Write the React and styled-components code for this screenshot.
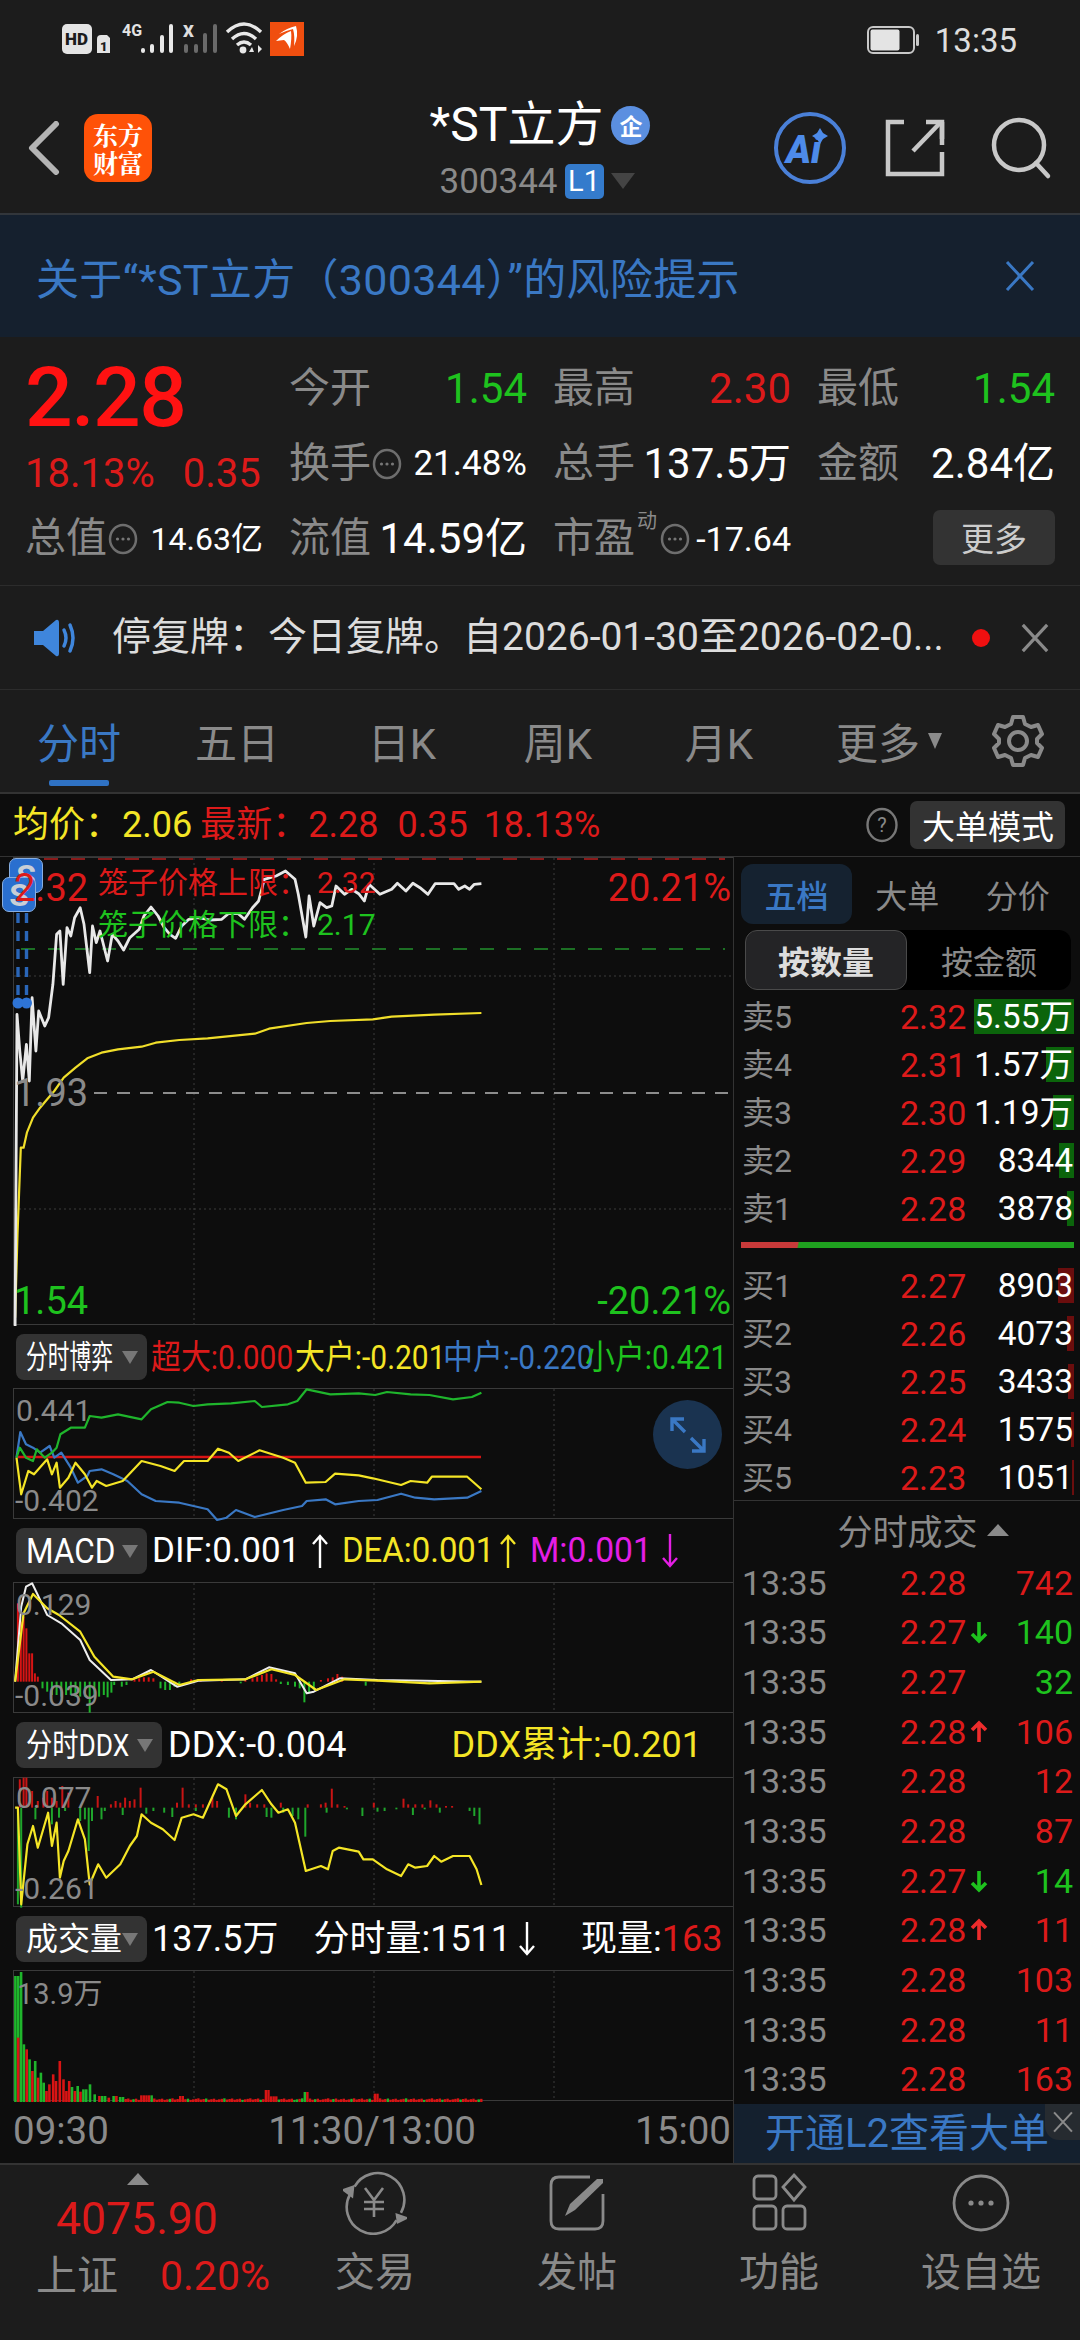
import React from 'react';
import styled, { createGlobalStyle } from 'styled-components';

const RED = '#dc1a1a';
const GREEN = '#1ec21e';
const GREY = '#8a8a8a';
const YELLOW = '#f4e526';
const BLUE = '#3a78c4';
const MAG = '#e41ee4';
const FONT = 'Roboto, "Noto Sans CJK SC", sans-serif';

const Global = createGlobalStyle`
  html, body { margin: 0; padding: 0; background: #1c1c1c; }
  * { box-sizing: border-box; }
  body { font-family: ${FONT}; }
`;

const Page = styled.div`
  width: 1080px; height: 2340px; overflow: hidden; background: #1c1c1c; color: #fff;
  display: flex; flex-direction: column;
`;

/* status bar */
const StatusBar = styled.div`
  height: 68px; flex: none; display: flex; align-items: center; justify-content: space-between;
  padding: 12px 63px 0 62px;
`;
const StatusRight = styled.div`display: flex; align-items: center; gap: 16px;`;
const Clock = styled.span`font-size: 33px; color: #ddd; line-height: 1;`;

/* header */
const Header = styled.div`
  height: 147px; flex: none; border-bottom: 2px solid #32363b; position: relative;
  display: grid; grid-template-columns: 330px 1fr 330px; align-items: start;
`;
const HeaderLeft = styled.div`display: flex; align-items: center; gap: 24px; padding: 46px 0 0 28px;`;
const LogoTile = styled.div`
  width: 68px; height: 68px; border-radius: 14px; background: #ff5208; display: flex; flex-direction: column;
  align-items: center; justify-content: center; font-family: "Noto Serif CJK SC", "Noto Sans CJK SC", serif;
  font-weight: 700; font-size: 25px; line-height: 28px; color: #fff;
`;
const HeaderCenter = styled.div`display: flex; flex-direction: column; align-items: center; padding-top: 28px;`;
const TitleRow = styled.div`display: flex; align-items: center; gap: 8px; height: 58px;`;
const Title = styled.span`font-size: 48px; line-height: 1; color: #fff;`;
const Verified = styled.span`
  width: 39px; height: 39px; border-radius: 50%; background: #5b8fe0; color: #fff; font-size: 23px; font-weight: 700;
  display: flex; align-items: center; justify-content: center;
`;
const CodeRow = styled.div`display: flex; align-items: center; gap: 7px; height: 42px; margin-top: 6px; margin-left: -6px;`;
const Code = styled.span`font-size: 35px; color: ${GREY}; line-height: 1;`;
const LevelBadge = styled.span`
  width: 39px; height: 35px; border-radius: 5px; background: #347bcc; color: #fff; font-size: 29px;
  display: flex; align-items: center; justify-content: center;
`;
const HeaderRight = styled.div`display: flex; align-items: center; justify-content: flex-end; gap: 0; padding: 42px 28px 0 0;`;

/* warning banner */
const Banner = styled.div`
  height: 122px; flex: none; background: #15202e; display: flex; align-items: center; justify-content: space-between;
  padding: 0 44px 0 36px; color: ${BLUE}; font-size: 43px; letter-spacing: .32px;
`;

/* quote */
const Quote = styled.div`
  height: 248px; flex: none; padding: 14px 0 0 25px; display: grid;
  grid-template-columns: 238px 238px 238px 238px; column-gap: 26px; grid-template-rows: 75px 75px 75px;
`;
const PriceBlock = styled.div`grid-row: 1 / 3; display: flex; flex-direction: column;`;
const BigPrice = styled.div`font-size: 84px; font-weight: 500; color: #ff1212; line-height: 88px; margin-top: 3px; letter-spacing: -1.5px;`;
const Delta = styled.div`display: flex; gap: 28px; font-size: 40px; color: ${RED}; line-height: 44px; margin-top: 10px; white-space: nowrap;`;
const Stat = styled.div`display: flex; align-items: center; justify-content: space-between; white-space: nowrap; position: relative;`;
const StatLabel = styled.span`font-size: 41px; color: ${GREY}; line-height: 1;`;
const StatValue = styled.span`font-size: ${p => p.$s || 42}px; color: ${p => p.$c || '#fff'}; line-height: 1; margin-left: auto;`;
const Sup = styled.span`position: absolute; left: 84px; top: 4px; font-size: 20px; color: ${GREY};`;
const MoreBtn = styled.div`
  width: 123px; height: 55px; border-radius: 7px; background: #333; color: #ccc; font-size: 33px; margin: -3px 0 0 116px;
  display: flex; align-items: center; justify-content: center;
`;

/* notice */
const Notice = styled.div`
  height: 105px; flex: none; border-top: 1px solid #2c2c2c; border-bottom: 1px solid #2c2c2c; display: flex; align-items: center;
  padding: 0 30px 0 34px;
`;
const NoticeText = styled.span`font-size: 39px; color: #ddd; margin-left: 34px; white-space: nowrap; width: 835px; overflow: hidden; line-height: 1.3;`;
const RedDot = styled.span`width: 18px; height: 18px; border-radius: 50%; background: #f01010; margin: 0 30px 0 26px; flex: none;`;

/* tabs */
const Tabs = styled.div`
  height: 104px; flex: none; display: grid; grid-template-columns: 158px 158px 172px 140px 182px 158px 100px;
  align-items: center; position: relative; border-bottom: 2px solid #333;
`;
const Tab = styled.div`
  font-size: 42px; color: ${p => (p.$on ? BLUE : GREY)}; display: flex; align-items: center; justify-content: center; height: 100%;
  position: relative; gap: 8px; padding-bottom: 1px;
  ${p => p.$on && `&::after { content: ''; position: absolute; left: 49px; width: 60px; height: 6px; bottom: 6px; border-radius: 2px; background: #2f72c4; }`}
`;

/* body */
const Body = styled.div`display: flex; background: #0d0d0d; height: 1369px; flex: none;`;
const LeftCol = styled.div`width: 734px; flex: none; border-right: 1px solid #333; display: flex; flex-direction: column;`;
const RightCol = styled.div`flex: 1; display: flex; flex-direction: column; padding-top: 0;`;

const SummaryRow = styled.div`
  height: 63px; flex: none; width: 1080px; display: flex; align-items: center; padding: 0 10px 0 13px; font-size: 36px; white-space: nowrap;
  background: #0d0d0d; position: relative; z-index: 1; border-bottom: 1px solid #333; margin-right: -346px;
`;
const Sum = styled.span`color: ${p => p.$c}; margin-left: ${p => p.$ml || 0}px; line-height: 1;`;
const ModeBtn = styled.div`
  height: 48px; width: 155px; border-radius: 7px; background: #333; color: #fff; font-size: 33px; margin-left: 12px; margin-top: -1px;
  display: flex; align-items: center; justify-content: center;
`;

const Pane = styled.div`
  margin-left: 13px; width: 720px; height: ${p => p.$h}px; flex: none; position: relative;
  border-top: 1px solid #3a3a3a; border-bottom: 1px solid #3a3a3a; border-left: 1px solid #3a3a3a;
  svg.draw { position: absolute; left: 0; top: 0; overflow: visible; }
`;
const ChartLabel = styled.span`
  position: absolute; top: ${p => p.$y}px; ${p => (p.$r ? `right: 2px;` : `left: ${p.$x ?? 2}px;`)}
  transform: translateY(-50%); font-size: ${p => p.$s || 30}px; color: ${p => p.$c || GREY}; line-height: 1; white-space: nowrap;
`;
const LimitValue = styled.span`margin-left: 9px;`;
const SBadge = styled.span`
  position: absolute; left: ${p => p.$x}px; top: ${p => p.$y}px; width: 34px; height: 35px; border-radius: 7px;
  background: #2a6fcf; border: 1px solid #88aee0; color: #c9ced6; font-size: 32px; font-weight: 700; display: flex; align-items: center; justify-content: center; line-height: 1;
`;
const ExpandBtn = styled.div`
  position: absolute; left: 639px; top: 11px; width: 69px; height: 69px; border-radius: 50%; background: #1a3350;
  display: flex; align-items: center; justify-content: center;
`;

const IndRow = styled.div`height: ${p => p.$h || 63}px; flex: none; display: flex; align-items: center; padding-left: 16px; font-size: ${p => p.$s || 35}px; white-space: nowrap;`;
const Pill = styled.div`
  width: ${p => p.$w || 131}px; height: 46px; flex: none; border-radius: 8px; background: #333; position: relative; overflow: hidden;
  &::after { content: ''; position: absolute; right: 9px; top: 17px; border: 8px solid transparent; border-top: 13px solid #777; border-bottom: 0; }
`;
const PillText = styled.span`
  position: absolute; left: 10px; top: 50%; font-size: ${p => p.$s || 32}px; color: #fff; line-height: 1; white-space: nowrap;
  transform: translateY(-50%) scaleX(${p => p.$sx || 1}); transform-origin: left center;
`;
const Read = styled.span`
  color: ${p => p.$c || '#fff'}; margin-left: ${p => p.$ml || 0}px; line-height: 1; display: inline-flex; align-items: center;
  ${p => p.$sx && `transform: scaleX(${p.$sx}); transform-origin: left center; width: ${p.$w}px;`}
`;

const Axis = styled.div`
  height: 61px; flex: none; padding: 0 2px 0 13px; display: flex; justify-content: space-between; align-items: center;
  font-size: 38.5px; color: ${GREY}; line-height: 1;
`;

/* right column */
const PanelTabs = styled.div`height: 60px; margin: 70px 7px 0 7px; flex: none; display: grid; grid-template-columns: 111px 1fr 1fr; align-items: center;`;
const PanelTab = styled.div`
  height: 60px; border-radius: 12px; background: ${p => (p.$on ? '#152230' : 'transparent')}; color: ${p => (p.$on ? BLUE : GREY)};
  font-size: 32px; font-weight: ${p => (p.$on ? 500 : 400)}; display: flex; align-items: center; justify-content: center;
`;
const Toggle = styled.div`height: 60px; margin: 6px 9px 0 11px; flex: none; border-radius: 12px; background: #000; display: grid; grid-template-columns: 162px 1fr;`;
const ToggleItem = styled.div`
  border-radius: 12px; font-size: 32px; display: flex; align-items: center; justify-content: center;
  ${p => (p.$on ? 'background:#242426; border:1px solid #4a4a4a; color:#ddd; font-weight:700;' : `color:${GREY};`)}
`;
const Book = styled.div`flex: none; margin-top: ${p => p.$mt}px;`;
const BookRow = styled.div`
  height: 48px; display: grid; grid-template-columns: 158px 1fr; padding: 0 7px 0 8px; align-items: center; position: relative; font-size: 34px; line-height: 1;
`;
const BookLabel = styled.span`color: ${GREY}; font-size: 32px;`;
const BookPrice = styled.span`color: ${RED}; z-index: 1;`;
const BookVol = styled.span`
  position: absolute; right: 7px; top: 50%; transform: translateY(-50%); z-index: 1; color: #fff; white-space: nowrap; font-size: 33.5px;
`;
const DepthBar = styled.span`
  position: absolute; right: 6px; top: 6px; height: 35px; background: ${p => (p.$sell ? '#0b640b' : '#6a0d0d')};
`;
const Ratio = styled.div`
  height: 6px; margin: 9px 6px 0 7px; flex: none; background: linear-gradient(100deg, #c83a3a 0 17%, #1fa01f 17.5% 100%);
`;
const TradeHead = styled.div`
  height: 58px; flex: none; border-top: 1px solid #333; margin-top: -2px; color: ${GREY}; font-size: 35px; display: flex; align-items: center; justify-content: center; gap: 9px; padding-left: 32px;
`;
const Tri = styled.span`width: 0; height: 0; border-left: 11px solid transparent; border-right: 11px solid transparent; border-bottom: 12px solid ${GREY};`;
const Trades = styled.div`flex: none; height: 546px; display: flex; flex-direction: column;`;
const TradeRow = styled.div`
  flex: 1; display: grid; grid-template-columns: 158px 70px 18px 1fr; align-items: center; padding: 0 7px 0 8px; font-size: 34px; line-height: 1;
`;
const TradeTime = styled.span`color: ${GREY};`;
const TradeVol = styled.span`color: ${p => p.$c}; text-align: right;`;
const L2 = styled.div`
  height: 59px; flex: none; background: #14202e; color: ${BLUE}; font-size: 40px; padding-left: 31px; display: flex; align-items: center; position: relative; line-height: 1;
`;
const L2Close = styled.div`
  position: absolute; right: 0; top: 0; width: 35px; height: 36px; background: #262b30; border-bottom-left-radius: 14px;
  display: flex; align-items: center; justify-content: center;
`;

/* bottom nav */
const Nav = styled.div`
  flex: 1; border-top: 2px solid #333; background: #1c1c1c; display: grid; grid-template-columns: 274px repeat(4, 202px); margin-top: 0;
`;
const IndexBlock = styled.div`display: flex; flex-direction: column; align-items: center; padding-top: 8px;`;
const NavTri = styled.span`width: 0; height: 0; border-left: 11px solid transparent; border-right: 11px solid transparent; border-bottom: 12px solid #8a8a8a; margin-left: 2px;`;
const IndexValue = styled.div`font-size: 44.5px; color: ${RED}; line-height: 48px; margin-top: 10px;`;
const IndexRow = styled.div`display: flex; align-items: center; gap: 42px; margin: 8px 0 0 36px; align-self: flex-start; line-height: 50px; font-size: 41px;`;
const IndexName = styled.span`color: ${GREY};`;
const IndexChange = styled.span`color: ${RED};`;
const NavItem = styled.div`display: flex; flex-direction: column; align-items: center; padding-top: 6px;`;
const NavLabel = styled.span`font-size: 40px; color: ${GREY}; line-height: 50px; margin-top: 13px;`;
const IconGap = styled.span`width: ${p => p.$w}px; flex: none;`;

/* chart geometry: reference-space points to pane-local pixels */
const SX = 2.119;
const lx = x => +(x / SX - 14).toFixed(1);
const trace = (pts, y0) => pts.map(([x, y]) => `${lx(x)},${+(y / 3 + y0).toFixed(1)}`).join(' ');

const MAIN_WHITE = [[32,1425],[36,490],[42,600],[48,690],[56,580],[62,690],[68,440],[76,600],[82,480],[95,525],[103,500],[112,400],[120,250],[127,240],[134,400],[142,230],[150,255],[158,200],[170,170],[178,220],[190,365],[196,225],[204,275],[212,240],[228,330],[238,250],[250,270],[262,297],[275,260],[295,235],[305,195],[320,168],[335,195],[348,230],[360,250],[372,262],[385,225],[400,205],[420,200],[445,207],[470,205],[485,187],[505,188],[518,205],[535,170],[548,150],[560,85],[585,75],[605,60],[625,85],[632,130],[648,258],[655,135],[665,225],[678,155],[692,170],[703,165],[712,105],[730,130],[745,115],[760,128],[772,150],[782,100],[805,130],[830,115],[842,97],[860,120],[875,97],[890,110],[907,130],[922,98],[962,98],[972,115],[985,105],[995,115],[1005,100],[1020,98]];
const MAIN_YELLOW = [[32,1400],[37,1150],[44,890],[50,890],[57,845],[70,800],[85,770],[100,745],[115,720],[135,680],[160,650],[185,622],[215,605],[250,595],[300,587],[330,575],[380,567],[440,562],[540,548],[570,533],[650,516],[700,510],[790,505],[830,497],[920,491],[1020,486]];
const G_GREEN = [[35,410],[42,380],[55,410],[70,420],[78,385],[95,410],[110,395],[120,380],[128,340],[150,320],[180,320],[190,285],[215,290],[250,280],[300,295],[320,265],[355,243],[380,245],[410,255],[440,250],[490,247],[540,240],[555,258],[610,250],[630,240],[650,205],[700,220],[760,217],[795,222],[820,213],[870,220],[910,222],[960,235],[1000,228],[1020,215]];
const G_BLUE = [[35,410],[43,333],[55,370],[70,380],[85,395],[105,375],[115,410],[130,395],[150,440],[165,485],[185,465],[190,450],[215,445],[240,460],[270,480],[300,520],[330,540],[380,545],[410,555],[440,565],[460,597],[480,590],[500,567],[540,588],[600,567],[640,555],[650,540],[690,535],[710,550],[760,540],[800,537],[850,518],[880,530],[920,535],[990,530],[1020,510]];
const G_YELLOW = [[35,410],[45,520],[60,450],[72,460],[100,415],[110,460],[120,425],[127,500],[145,470],[160,425],[180,460],[195,500],[205,480],[225,495],[260,480],[300,420],[340,435],[370,450],[390,420],[440,420],[462,383],[485,395],[505,420],[550,388],[600,410],[625,425],[648,485],[690,483],[710,458],[760,463],[790,472],[850,492],[870,480],[905,485],[915,467],[990,467],[1020,505]];
const M_WHITE = [[32,1085],[45,860],[55,800],[68,790],[80,825],[100,885],[130,910],[170,960],[190,1020],[235,1080],[280,1078],[320,1050],[375,1100],[420,1082],[520,1078],[570,1042],[625,1060],[650,1120],[665,1115],[720,1075],[800,1080],[900,1082],[1020,1085]];
const M_YELLOW = [[32,1085],[50,880],[70,822],[100,865],[125,885],[170,935],[200,1010],[240,1070],[280,1078],[325,1055],[380,1095],[420,1080],[520,1078],[575,1048],[625,1065],[670,1110],[730,1078],[800,1082],[910,1090],[1020,1085]];
const M_RED = [[38,850],[44,905],[50,890],[56,925],[62,1000],[68,1000],[74,1060],[80,1070],[285,1078],[295,1075],[305,1072],[315,1072],[325,1075],[405,1078],[425,1079],[470,1080],[520,1079],[535,1075],[545,1070],[555,1065],[565,1060],[575,1062],[585,1078],[680,1080],[695,1075],[705,1072],[715,1062],[725,1070],[800,1080],[850,1081]];
const M_GREEN = [[90,1105],[100,1115],[110,1125],[120,1125],[130,1130],[140,1125],[150,1125],[160,1130],[170,1130],[180,1130],[190,1178],[200,1130],[210,1130],[220,1125],[228,1132],[236,1118],[242,1095],[258,1100],[268,1095],[340,1105],[350,1110],[360,1110],[370,1100],[380,1095],[510,1090],[595,1092],[610,1095],[625,1100],[635,1105],[645,1147],[655,1120],[665,1110],[775,1097],[910,1092]];
const D_LINE = [[32,200],[38,200],[45,490],[58,310],[70,255],[80,320],[102,215],[110,315],[120,245],[127,410],[135,360],[145,330],[165,235],[180,295],[190,430],[208,370],[225,410],[255,370],[275,315],[290,285],[300,220],[320,245],[345,265],[370,297],[385,230],[410,220],[430,230],[462,130],[480,145],[500,225],[520,190],[555,147],[575,190],[590,215],[610,205],[625,245],[648,390],[680,375],[695,385],[705,330],[718,320],[760,332],[770,355],[790,355],[820,385],[850,405],[865,370],[880,380],[905,375],[920,345],[935,362],[960,345],[995,345],[1010,385],[1020,432]];
const D_RED = [[42,115],[50,110],[56,110],[68,150],[80,180],[92,170],[100,150],[110,170],[120,180],[132,135],[145,155],[207,165],[235,190],[245,180],[255,185],[265,170],[275,180],[285,175],[298,140],[375,185],[387,140],[400,190],[415,190],[430,190],[450,170],[460,180],[520,160],[530,185],[545,190],[560,190],[595,185],[652,190],[680,190],[690,185],[703,143],[715,190],[730,195],[792,185],[855,173],[865,190],[880,190],[895,190],[912,178],[925,190],[945,195],[958,195]];
const D_GREEN = [[38,490],[45,500],[75,235],[110,250],[125,230],[138,210],[170,240],[180,235],[188,330],[195,240],[215,235],[222,210],[260,222],[310,218],[325,210],[348,215],[365,228],[415,210],[485,230],[500,235],[565,228],[575,230],[600,215],[620,225],[632,235],[647,287],[692,215],[735,205],[768,225],[800,212],[815,210],[840,205],[875,222],[900,205],[932,215],[995,210],[1005,225],[1016,250]];
const V_HEAD = [[32,705,'g'],[38,705,'g'],[44,693,'g'],[38,890,'r'],[50,910,'g'],[56,925,'r'],[62,955,'g'],[68,990,'r'],[74,960,'g'],[80,1010,'r'],[86,995,'g'],[92,1025,'g'],[98,1050,'r'],[104,1030,'r'],[112,1000,'r'],[118,1020,'r'],[126,960,'r'],[134,1015,'r'],[140,1050,'r'],[146,1020,'r'],[152,1038,'g'],[158,1050,'r'],[164,1035,'g'],[170,1052,'r'],[176,1045,'g'],[182,1045,'g'],[190,1030,'g'],[200,1060,'g'],[210,1065,'r'],[216,1065,'g'],[222,1065,'g'],[230,1070,'r'],[240,1065,'g'],[246,1065,'r'],[254,1068,'g'],[260,1068,'g']];
const bump = x => (x > 295 && x < 325 ? 1063 : x > 558 && x < 570 ? 1047 : x > 640 && x < 652 ? 1053 : x > 792 && x < 802 ? 1058 : x > 570 && x < 590 ? 1066 : x > 380 && x < 392 ? 1065 : 1072 + ((x * 7) % 5));
const V_TAIL = [];
for (let x = 266; x <= 1022; x += 5.5) {
  V_TAIL.push([x, bump(x), Math.round(x / 5.5) % 7 === 2 || (x > 620 && x < 652 && Math.round(x) % 2 === 0) ? 'g' : 'r']);
}

const barX = x => lx(x) - 1;
const Bars = ({ data, base, y0, color, w = 2 }) => data.map(([x, y], i) => {
  const a = y / 3 + y0;
  const b = base / 3 + y0;
  return <rect key={i} x={barX(x)} y={Math.min(a, b)} width={w} height={Math.abs(a - b)} fill={color} />;
});

const GridX = ({ h }) => [180, 360, 540].map(x => (
  <line key={x} x1={x} x2={x} y1={0} y2={h} stroke="#3c3c3c" strokeWidth="1" strokeDasharray="2 3" />
));

const Draw = ({ h, children }) => (
  <svg className="draw" width="719" height={h} viewBox={`0 0 719 ${h}`}>{children}</svg>
);

const line = { fill: 'none', strokeLinejoin: 'round' };

const Chevron = () => (
  <svg width="32" height="54" viewBox="0 0 32 54"><path d="M28 3 L4 27 L28 51" fill="none" stroke="#b4b4b4" strokeWidth="6" strokeLinecap="round" strokeLinejoin="round" /></svg>
);
const AiIcon = () => (
  <svg width="76" height="76" viewBox="0 0 76 76">
    <circle cx="38" cy="38" r="34" fill="none" stroke="#4a80d8" strokeWidth="4" />
    <text x="14" y="53" fontFamily="Roboto" fontWeight="900" fontStyle="italic" fontSize="38" fill="#4d8bea">Ai</text>
    <path d="M48 18 l3 5 5 3 -5 3 -3 5 -3 -5 -5 -3 5 -3z" fill="#4d8bea" />
  </svg>
);
const ShareIcon = () => (
  <svg width="62" height="62" viewBox="0 0 62 62" fill="none" stroke="#c8c8c8" strokeWidth="4.5">
    <path d="M20 5 H4 V57 H58 V35 " /><path d="M58 5 V28" />
    <path d="M29 34 L56 6" /><path d="M42 5 H58 V22" />
  </svg>
);
const SearchIcon = () => (
  <svg width="62" height="64" viewBox="0 0 62 64" fill="none" stroke="#c8c8c8" strokeWidth="4.5" strokeLinecap="round">
    <circle cx="29" cy="29" r="25" /><path d="M46 47 L58 60" />
  </svg>
);
const CloseX = ({ c = BLUE, s = 32, w = 3 }) => (
  <svg width={s} height={s} viewBox="0 0 32 32"><path d="M3 2 L29 30 M29 2 L3 30" stroke={c} strokeWidth={w} fill="none" /></svg>
);
const Dots = ({ mx = 3 }) => (
  <svg width="30" height="32" viewBox="0 0 30 32" style={{ flex: 'none', margin: `0 ${mx}px` }}>
    <ellipse cx="15" cy="16" rx="13" ry="14" fill="none" stroke="#6e6e6e" strokeWidth="2.5" />
    <circle cx="9.5" cy="16" r="1.6" fill="#777" /><circle cx="15" cy="16" r="1.6" fill="#777" /><circle cx="20.5" cy="16" r="1.6" fill="#777" />
  </svg>
);
const Speaker = () => (
  <svg width="44" height="38" viewBox="0 0 44 38" style={{ flex: 'none' }}>
    <path d="M0 12 H9 L22 1 Q25 0 25 4 V34 Q25 38 22 37 L9 26 H0 Z" fill="#3f86dc" />
    <path d="M30 11 Q34 19 30 27 M36 6 Q42 19 36 32" stroke="#3f86dc" strokeWidth="3.5" fill="none" strokeLinecap="round" />
  </svg>
);
const Gear = () => (
  <svg width="52" height="54" viewBox="0 0 52 54" fill="none" stroke={GREY} strokeWidth="4" strokeLinejoin="round">
    <path d="M21 3 H31 L33 10 L39 13 L46 11 L50 20 L45 25 V29 L50 34 L46 43 L39 41 L33 44 L31 51 H21 L19 44 L13 41 L6 43 L2 34 L7 29 V25 L2 20 L6 11 L13 13 L19 10 Z" />
    <circle cx="26" cy="27" r="9" />
  </svg>
);
const ArrowGlyph = ({ dir, c, h = 34 }) => (
  <svg width="20" height={h} viewBox={`0 0 20 ${h}`} style={{ flex: 'none' }}>
    {dir === 'up'
      ? <path d={`M10 2 V${h} M3 10 L10 2 L17 10`} stroke={c} strokeWidth="2.4" fill="none" />
      : <path d={`M10 0 V${h - 2} M3 ${h - 10} L10 ${h - 2} L17 ${h - 10}`} stroke={c} strokeWidth="2.4" fill="none" />}
  </svg>
);
const TickArrow = ({ dir }) => (
  <svg width="18" height="24" viewBox="0 0 18 24">
    {dir === 'up'
      ? <path d="M9 22 V3 M2 10 L9 3 L16 10" stroke="#ee2c2c" strokeWidth="3.6" fill="none" />
      : <path d="M9 2 V21 M2 14 L9 21 L16 14" stroke={GREEN} strokeWidth="3.6" fill="none" />}
  </svg>
);
const YenIcon = () => (
  <svg width="64" height="64" viewBox="0 0 64 64" fill="none" stroke={GREY} strokeWidth="2.6">
    <path d="M13 14 A26 26 0 0 1 57 44" transform="rotate(-5 32 32)" /><path d="M52 51 A26 26 0 0 1 8 21" transform="rotate(-5 32 32)" />
    <path d="M2 21 L11 18 L10 27Z" fill={GREY} transform="translate(-1 -2)" /><path d="M60 44 L52 48 L51 41Z" fill={GREY} transform="translate(3 3)" />
    <path d="M22 17 L31 29 L40 17 M31 29 V46 M21 31 H41 M21 38 H41" />
  </svg>
);
const PostIcon = () => (
  <svg width="64" height="64" viewBox="0 0 64 64" fill="none" stroke={GREY} strokeWidth="2.8">
    <path d="M45 6 H14 Q6 6 6 14 V50 Q6 58 14 58 H50 Q58 58 58 50 V23" />
    <path d="M20 45 L25 33 L52 8 L58 8 L58 12 L30 39 Z" fill={GREY} stroke="none" />
  </svg>
);
const FuncIcon = () => (
  <svg width="64" height="64" viewBox="0 0 64 64" fill="none" stroke={GREY} strokeWidth="2.8">
    <rect x="7" y="5" width="22" height="23" rx="4" /><rect x="7" y="35" width="22" height="23" rx="4" /><rect x="36" y="35" width="22" height="23" rx="4" />
    <path d="M47 4 L58 16 L47 29 L36 16 Z" />
  </svg>
);
const MoreIcon = () => (
  <svg width="64" height="64" viewBox="0 0 64 64" fill="none" stroke={GREY} strokeWidth="2.8">
    <circle cx="32" cy="32" r="27" /><circle cx="22" cy="32" r="2.6" fill={GREY} stroke="none" /><circle cx="32" cy="32" r="2.6" fill={GREY} stroke="none" /><circle cx="42" cy="32" r="2.6" fill={GREY} stroke="none" />
  </svg>
);
const StatusIcons = () => (
  <svg width="244" height="36" viewBox="62 24 244 36">
    <rect x="62" y="26" width="30" height="30" rx="5" fill="#e4e4e4" />
    <text x="65" y="47" fontFamily="Roboto" fontWeight="900" fontSize="17" fill="#1c1c1c">HD</text>
    <path d="M97 41 Q97 37 101 37 H107 L110 40 V55 H97Z" fill="#e4e4e4" />
    <text x="100" y="53" fontFamily="Roboto" fontWeight="900" fontSize="13" fill="#1c1c1c">1</text>
    <text x="122" y="38" fontFamily="Roboto" fontWeight="700" fontSize="16" fill="#e4e4e4">4G</text>
    {[[141, 50], [150, 46], [160, 37], [169, 26]].map(([x, y]) => <rect key={x} x={x} y={y} width="4" height={55 - y} rx="2" fill="#e8e8e8" />)}
    <text x="183" y="39" fontFamily="Roboto" fontWeight="900" fontSize="17" fill="#ddd">X</text>
    {[[184, 46], [194, 46], [203, 35], [213, 26]].map(([x, y]) => <rect key={x} x={x} y={y} width="4" height={55 - y} rx="2" fill="#6a6a6a" />)}
    <path d="M227 34 Q244 18 261 34 M232 41 Q244 30 256 41 M237 47 Q244 41 251 47" stroke="#e8e8e8" strokeWidth="3.4" fill="none" />
    <circle cx="243" cy="52" r="3.4" fill="#e8e8e8" />
    <path d="M252 49 L249 54 H254Z M258 47 V55 L262 51Z" fill="#e8e8e8" />
    <rect x="270" y="24" width="34" height="34" fill="#f04e0f" />
    <path d="M276 43 Q283 36 291 33 Q292 40 290 51 Q287 44 284 42 Z" fill="#fff" />
    <path d="M279 36 Q287 30 296 28 Q299 38 294 48 Q295 38 293 31 Q285 33 279 36Z" fill="#fff" />
  </svg>
);
const Battery = () => (
  <svg width="52" height="28" viewBox="0 0 52 28">
    <rect x="1" y="1" width="46" height="26" rx="5" fill="none" stroke="#c8c8c8" strokeWidth="2" />
    <rect x="3.5" y="3.5" width="29" height="21" rx="2" fill="#e4e4e4" />
    <rect x="49" y="8" width="3" height="12" rx="1.5" fill="#c8c8c8" />
  </svg>
);

const ASKS = [['卖5', '2.32', '5.55万', 55500], ['卖4', '2.31', '1.57万', 15700], ['卖3', '2.30', '1.19万', 11900], ['卖2', '2.29', '8344', 8344], ['卖1', '2.28', '3878', 3878]];
const BIDS = [['买1', '2.27', '8903', 8903], ['买2', '2.26', '4073', 4073], ['买3', '2.25', '3433', 3433], ['买4', '2.24', '1575', 1575], ['买5', '2.23', '1051', 1051]];
const TRADES = [['2.28', '', '742', RED], ['2.27', 'd', '140', GREEN], ['2.27', '', '32', GREEN], ['2.28', 'u', '106', RED], ['2.28', '', '12', RED], ['2.28', '', '87', RED], ['2.27', 'd', '14', GREEN], ['2.28', 'u', '11', RED], ['2.28', '', '103', RED], ['2.28', '', '11', RED], ['2.28', '', '163', RED]];

const depthWidth = v => `${Math.max(1, (v / 55500) * 100)}px`;

const BookRows = ({ rows, sell }) => rows.map(([label, price, vol, n]) => (
  <BookRow key={label}>
    <BookLabel>{label}</BookLabel>
    <BookPrice>{price}</BookPrice>
    <DepthBar $sell={sell} style={{ width: depthWidth(n) }} />
    <BookVol>{vol}</BookVol>
  </BookRow>
));

export default function App() {
  return (
    <Page>
      <Global />
      <StatusBar>
        <StatusIcons />
        <StatusRight><Battery /><Clock>13:35</Clock></StatusRight>
      </StatusBar>
      <Header>
        <HeaderLeft>
          <Chevron />
          <LogoTile><span>东方</span><span>财富</span></LogoTile>
        </HeaderLeft>
        <HeaderCenter>
          <TitleRow><Title>*ST立方</Title><Verified>企</Verified></TitleRow>
          <CodeRow>
            <Code>300344</Code><LevelBadge>L1</LevelBadge>
            <svg width="24" height="16" viewBox="0 0 24 16"><path d="M0 0 H24 L12 16Z" fill="#444" /></svg>
          </CodeRow>
        </HeaderCenter>
        <HeaderRight>
          <AiIcon />
          <IconGap $w={36} />
          <ShareIcon />
          <IconGap $w={44} />
          <SearchIcon />
        </HeaderRight>
      </Header>
      <Banner>
        <span>关于“*ST立方（300344）”的风险提示</span>
        <CloseX />
      </Banner>
      <Quote>
        <PriceBlock>
          <BigPrice>2.28</BigPrice>
          <Delta><span>18.13%</span><span>0.35</span></Delta>
        </PriceBlock>
        <Stat><StatLabel>今开</StatLabel><StatValue $c={GREEN}>1.54</StatValue></Stat>
        <Stat><StatLabel>最高</StatLabel><StatValue $c={RED}>2.30</StatValue></Stat>
        <Stat><StatLabel>最低</StatLabel><StatValue $c={GREEN}>1.54</StatValue></Stat>
        <Stat><StatLabel>换手</StatLabel><Dots mx={1} /><StatValue $s={35}>21.48%</StatValue></Stat>
        <Stat><StatLabel>总手</StatLabel><StatValue>137.5万</StatValue></Stat>
        <Stat><StatLabel>金额</StatLabel><StatValue>2.84亿</StatValue></Stat>
        <Stat><StatLabel>总值</StatLabel><Dots mx={1} /><StatValue $s={32}>14.63亿</StatValue></Stat>
        <Stat><StatLabel>流值</StatLabel><StatValue>14.59亿</StatValue></Stat>
        <Stat><StatLabel>市盈</StatLabel><Sup>动</Sup><IconGap $w={24} /><Dots mx={1} /><StatValue $s={34}>-17.64</StatValue></Stat>
        <Stat><MoreBtn>更多</MoreBtn></Stat>
      </Quote>
      <Notice>
        <Speaker />
        <NoticeText>停复牌：今日复牌。自2026-01-30至2026-02-0...</NoticeText>
        <RedDot />
        <CloseX c="#8a8a8a" s={30} w={3.4} />
      </Notice>
      <Tabs>
        <Tab $on>分时</Tab>
        <Tab>五日</Tab>
        <Tab>日K</Tab>
        <Tab>周K</Tab>
        <Tab>月K</Tab>
        <Tab>更多<svg width="14" height="16" viewBox="0 0 14 16"><path d="M0 0 H14 L7 16Z" fill={GREY} /></svg></Tab>
        <Tab><Gear /></Tab>
      </Tabs>
      <Body>
        <LeftCol>
          <SummaryRow>
            <Sum $c={YELLOW}>均价：</Sum><Sum $c={YELLOW} $ml={1}>2.06</Sum>
            <Sum $c={RED} $ml={8}>最新：</Sum><Sum $c={RED} $ml={0}>2.28</Sum><Sum $c={RED} $ml={19}>0.35</Sum><Sum $c={RED} $ml={16}>18.13%</Sum>
            <svg width="32" height="36" viewBox="0 0 32 36" style={{ marginLeft: 266 }}>
              <ellipse cx="16" cy="18" rx="14.5" ry="16" fill="none" stroke="#777" strokeWidth="2.4" />
              <text x="16" y="25" textAnchor="middle" fontFamily="Roboto" fontSize="20" fill="#888">?</text>
            </svg>
            <ModeBtn>大单模式</ModeBtn>
          </SummaryRow>
          <Pane $h={468}>
            <Draw h={466}>
              <GridX h={466} />
              <line x1="0" x2="719" y1="118" y2="118" stroke="#3c3c3c" strokeDasharray="2 3" />
              <line x1="0" x2="719" y1="351" y2="351" stroke="#3c3c3c" strokeDasharray="2 3" />
              <line x1="30" x2="711" y1="1" y2="1" stroke="#8a1a1a" strokeWidth="2" strokeDasharray="14 13" />
              <line x1="7" x2="711" y1="91" y2="91" stroke="#22912c" strokeWidth="1.6" strokeDasharray="14 13" />
              <line x1="80" x2="719" y1="235" y2="235" stroke="#8c8c8c" strokeWidth="1.8" strokeDasharray="13 10" />
              <polyline points={trace(MAIN_YELLOW, -7)} {...line} stroke="#f0de2a" strokeWidth="2.2" />
              <polyline points={trace(MAIN_WHITE, -7)} {...line} stroke="#e8e8e8" strokeWidth="2.8" />
              <g stroke="#2a66b8" strokeWidth="3.4" strokeDasharray="10 8">
                <line x1="4" x2="4" y1="55" y2="140" />
                <line x1="12.5" x2="12.5" y1="55" y2="140" />
              </g>
              <circle cx="4" cy="145" r="5.5" fill="#2e74d6" /><circle cx="12.5" cy="145" r="5.5" fill="#2e74d6" />
            </Draw>
            <SBadge $x={-5} $y={0}>S</SBadge>
            <SBadge $x={-12} $y={19}>S</SBadge>
            <ChartLabel $x={0} $y={30} $s={38} $c={RED}>2.32</ChartLabel>
            <ChartLabel $r $y={30} $s={38} $c={RED}>20.21%</ChartLabel>
            <ChartLabel $x={84} $y={25} $c={RED}>笼子价格上限：<LimitValue>2.32</LimitValue></ChartLabel>
            <ChartLabel $x={84} $y={67} $c={GREEN}>笼子价格下限：<LimitValue>2.17</LimitValue></ChartLabel>
            <ChartLabel $x={0} $y={235} $s={38}>1.93</ChartLabel>
            <ChartLabel $x={0} $y={443} $s={38} $c={GREEN}>1.54</ChartLabel>
            <ChartLabel $r $y={443} $s={38} $c={GREEN}>-20.21%</ChartLabel>
          </Pane>
          <IndRow $s={34}>
            <Pill><PillText $sx={0.68}>分时博弈</PillText></Pill>
            <Read $c={RED} $ml={4} $sx={0.88} $w={144}>超大:0.000</Read>
            <Read $c={YELLOW} $sx={0.88} $w={148}>大户:-0.201</Read>
            <Read $c={BLUE} $sx={0.88} $w={142}>中户:-0.220</Read>
            <Read $c={GREEN} $sx={0.88} $w={140}>小户:0.421</Read>
          </IndRow>
          <Pane $h={131}>
            <Draw h={129}>
              <GridX h={129} />
              <line x1="2" x2="467" y1="68" y2="68" stroke="#d81414" strokeWidth="2.4" />
              <polyline points={trace(G_BLUE, -68)} {...line} stroke="#3a78c4" strokeWidth="2.2" />
              <polyline points={trace(G_YELLOW, -68)} {...line} stroke={YELLOW} strokeWidth="2.2" />
              <polyline points={trace(G_GREEN, -68)} {...line} stroke="#1fb52c" strokeWidth="2.2" />
            </Draw>
            <ChartLabel $x={2} $y={22}>0.441</ChartLabel>
            <ChartLabel $x={1} $y={112}>-0.402</ChartLabel>
            <ExpandBtn>
              <svg width="36" height="36" viewBox="0 0 36 36" fill="none" stroke="#3a78c4" strokeWidth="3.4">
                <path d="M2 14 V2 H14 M2 2 L15 15 M34 22 V34 H22 M34 34 L21 21" />
              </svg>
            </ExpandBtn>
          </Pane>
          <IndRow>
            <Pill><PillText $s={35} $sx={0.9}>MACD</PillText></Pill>
            <Read $ml={5}>DIF:0.001</Read><Read $ml={10}><ArrowGlyph dir="up" c="#fff" /></Read>
            <Read $c={YELLOW} $ml={12} $sx={0.94} $w={146}>DEA:0.001</Read><Read $ml={10}><ArrowGlyph dir="up" c={YELLOW} /></Read>
            <Read $c={MAG} $ml={12} $sx={0.96} $w={120}>M:0.001</Read><Read $ml={10}><ArrowGlyph dir="down" c={MAG} /></Read>
          </IndRow>
          <Pane $h={131}>
            <Draw h={129}>
              <GridX h={129} />
              <Bars data={M_RED} base={1085} y0={-263} color="#d81414" />
              <Bars data={M_GREEN} base={1085} y0={-263} color="#1fb52c" />
              <polyline points={trace(M_WHITE, -263)} {...line} stroke="#eee" strokeWidth="2" />
              <polyline points={trace(M_YELLOW, -263)} {...line} stroke={YELLOW} strokeWidth="2.2" />
            </Draw>
            <ChartLabel $x={2} $y={22}>0.129</ChartLabel>
            <ChartLabel $x={1} $y={113}>-0.039</ChartLabel>
          </Pane>
          <IndRow $h={64} $s={36}>
            <Pill $w={146}><PillText $sx={0.82}>分时DDX</PillText></Pill>
            <Read $ml={6}>DDX:-0.004</Read>
            <Read $c={YELLOW} $ml={105}>DDX累计:-0.201</Read>
          </IndRow>
          <Pane $h={130}>
            <Draw h={128}>
              <GridX h={128} />
              <Bars data={D_RED} base={200} y0={-37} color="#c81414" />
              <Bars data={D_GREEN} base={200} y0={-37} color="#1fa52c" />
              <polyline points={trace(D_LINE, -37)} {...line} stroke={YELLOW} strokeWidth="2.2" />
            </Draw>
            <ChartLabel $x={2} $y={20}>0.077</ChartLabel>
            <ChartLabel $x={1} $y={111}>-0.261</ChartLabel>
          </Pane>
          <IndRow $s={36}>
            <Pill><PillText>成交量</PillText></Pill>
            <Read $ml={5}>137.5万</Read>
            <Read $ml={35}>分时量:1511</Read><Read $ml={6}><ArrowGlyph dir="down" c="#fff" /></Read>
            <Read $ml={44}>现量:</Read><Read $c={RED}>163</Read>
          </IndRow>
          <Pane $h={131}>
            <Draw h={129}>
              <GridX h={129} />
              {[...V_HEAD, ...V_TAIL].map(([x, y, c], i) => (
                <rect key={i} x={barX(x)} y={y / 3 - 230} width={x < 262 ? 2.6 : 2.4} height={(1083 - y) / 3} fill={c === 'g' ? '#1fb52c' : '#d81414'} />
              ))}
            </Draw>
            <ChartLabel $x={3} $y={23} $s={29}>13.9万</ChartLabel>
          </Pane>
          <Axis><span>09:30</span><span>11:30/13:00</span><span>15:00</span></Axis>
        </LeftCol>
        <RightCol>
          <PanelTabs>
            <PanelTab $on>五档</PanelTab>
            <PanelTab>大单</PanelTab>
            <PanelTab>分价</PanelTab>
          </PanelTabs>
          <Toggle>
            <ToggleItem $on>按数量</ToggleItem>
            <ToggleItem>按金额</ToggleItem>
          </Toggle>
          <Book $mt={3}><BookRows rows={ASKS} sell /></Book>
          <Ratio />
          <Book $mt={14}><BookRows rows={BIDS} /></Book>
          <TradeHead>分时成交<Tri /></TradeHead>
          <Trades>
            {TRADES.map(([p, a, v, c], i) => (
              <TradeRow key={i}>
                <TradeTime>13:35</TradeTime>
                <BookPrice>{p}</BookPrice>
                <span>{a === 'u' && <TickArrow dir="up" />}{a === 'd' && <TickArrow dir="down" />}</span>
                <TradeVol $c={c}>{v}</TradeVol>
              </TradeRow>
            ))}
          </Trades>
          <L2>
            开通L2查看大单
            <L2Close><CloseX c="#8a8a8a" s={22} w={3} /></L2Close>
          </L2>
        </RightCol>
      </Body>
      <Nav>
        <IndexBlock>
          <NavTri />
          <IndexValue>4075.90</IndexValue>
          <IndexRow><IndexName>上证</IndexName><IndexChange>0.20%</IndexChange></IndexRow>
        </IndexBlock>
        <NavItem><YenIcon /><NavLabel>交易</NavLabel></NavItem>
        <NavItem><PostIcon /><NavLabel>发帖</NavLabel></NavItem>
        <NavItem><FuncIcon /><NavLabel>功能</NavLabel></NavItem>
        <NavItem><MoreIcon /><NavLabel>设自选</NavLabel></NavItem>
      </Nav>
    </Page>
  );
}
